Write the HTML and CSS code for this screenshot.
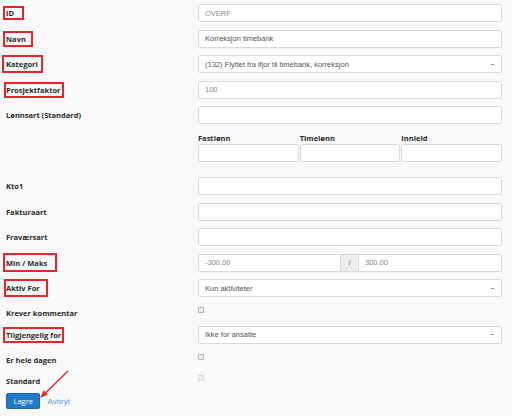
FILE: index.html
```html
<!DOCTYPE html>
<html lang="no">
<head>
<meta charset="utf-8">
<title>Fraværstype</title>
<link rel="stylesheet" href="styles.css">
</head>
<body>
<form class="form">
  <div class="row">
    <div class="lbl"><span class="hl hl-id">ID</span></div>
    <div class="ctl"><input class="input light" value="OVERF" readonly></div>
  </div>
  <div class="row">
    <div class="lbl"><span class="hl hl-navn">Navn</span></div>
    <div class="ctl"><input class="input" value="Korreksjon timebank"></div>
  </div>
  <div class="row">
    <div class="lbl"><span class="hl hl-kat">Kategori</span></div>
    <div class="ctl"><div class="input select"><span>(132) Flyttet fra ifjor til timebank, korreksjon</span><span class="caret"></span></div></div>
  </div>
  <div class="row">
    <div class="lbl"><span class="hl hl-pf">Prosjektfaktor</span></div>
    <div class="ctl"><input class="input light" value="100"></div>
  </div>
  <div class="row">
    <div class="lbl">Lønnsart (Standard)</div>
    <div class="ctl"><input class="input" value=""></div>
  </div>
  <div class="row row-sub">
    <div class="lbl"></div>
    <div class="ctl sub-grid">
      <div class="sub-lbl">Fastlønn</div>
      <div class="sub-lbl">Timelønn</div>
      <div class="sub-lbl">Innleid</div>
      <input class="input" value="">
      <input class="input" value="">
      <input class="input" value="">
    </div>
  </div>
  <div class="row">
    <div class="lbl">Kto1</div>
    <div class="ctl"><input class="input" value=""></div>
  </div>
  <div class="row">
    <div class="lbl">Fakturaart</div>
    <div class="ctl"><input class="input" value=""></div>
  </div>
  <div class="row">
    <div class="lbl">Fraværsart</div>
    <div class="ctl"><input class="input" value=""></div>
  </div>
  <div class="row">
    <div class="lbl"><span class="hl hl-mm">Min / Maks</span></div>
    <div class="ctl group">
      <input class="input light g-left" value="-300,00">
      <span class="addon">/</span>
      <input class="input light g-right" value="300,00">
    </div>
  </div>
  <div class="row">
    <div class="lbl"><span class="hl hl-af">Aktiv For</span></div>
    <div class="ctl"><div class="input select"><span>Kun aktiviteter</span><span class="caret"></span></div></div>
  </div>
  <div class="row row-check">
    <div class="lbl">Krever kommentar</div>
    <div class="ctl"><input type="checkbox" class="check"></div>
  </div>
  <div class="row">
    <div class="lbl"><span class="hl hl-tf">Tilgjengelig for</span></div>
    <div class="ctl"><div class="input select"><span>Ikke for ansatte</span><span class="caret"></span></div></div>
  </div>
  <div class="row row-check">
    <div class="lbl">Er hele dagen</div>
    <div class="ctl"><input type="checkbox" class="check"></div>
  </div>
  <div class="row row-check">
    <div class="lbl">Standard</div>
    <div class="ctl"><input type="checkbox" class="check" disabled></div>
  </div>
  <div class="actions">
    <button type="button" class="btn">Lagre</button>
    <a class="link" href="#">Avbryt</a>
    <svg class="arrow" width="40" height="36" viewBox="0 0 40 36">
      <line x1="32" y1="4" x2="10" y2="25.4" stroke="#e8262a" stroke-width="1.4"/>
      <polygon points="4,31 11.9,27.6 7.7,23.3" fill="#e8262a"/>
    </svg>
  </div>
</form>
</body>
</html>
```

FILE: styles.css
```css
body {
  margin: 0;
  background: #f9f9f9;
  font-family: "Open Sans", "Liberation Sans", sans-serif;
  color: #2b2b2b;
}

.form {
  padding: 4px 10px 0 6px;
}

.row {
  display: flex;
  margin-bottom: 7.5px;
}

.lbl {
  width: 192px;
  flex: none;
  font-size: 7.5px;
  font-weight: 700;
  line-height: 12px;
  padding-top: 3px;
  white-space: nowrap;
}

.ctl {
  width: 304px;
  flex: none;
}

.hl {
  border: 2px solid #e8262a;
}
.hl-id { margin-left: -3px; padding: 0 8px 0 1px; }
.hl-navn { margin-left: -3px; padding: 1px 5px 1px 1px; }
.hl-kat { margin-left: -4px; padding: 2px 3px 2px 2px; }
.hl-pf { margin-left: -2px; padding: 1px 1px 1px 0; }
.hl-mm { margin-left: -3px; padding: 2.5px 8px 2.5px 1px; }
.hl-af { margin-left: -2px; padding: 2px 6px 2px 0; }
.hl-tf { margin-left: -3px; padding: 1px 1px 1px 1px; }

.input {
  display: block;
  width: 100%;
  height: 18px;
  box-sizing: border-box;
  margin: 0;
  padding: 0 6px;
  border: 1px solid #dadada;
  border-radius: 2px;
  background: #fff;
  font-family: "Liberation Sans", Arial, sans-serif;
  font-size: 7.5px;
  color: #555;
  outline: none;
}

.input.light {
  color: #8a8a8a;
}

.select {
  display: flex;
  align-items: center;
  justify-content: space-between;
  white-space: nowrap;
}

.caret {
  width: 3px;
  height: 1px;
  background: #999;
  margin-right: 1px;
}

.row-sub {
  margin-bottom: 15px;
}

.sub-grid {
  display: grid;
  grid-template-columns: 1fr 1fr 1fr;
  column-gap: 1px;
}

.sub-lbl {
  font-size: 7.5px;
  font-weight: 700;
  line-height: 12px;
  height: 12.5px;
}

.group {
  display: flex;
}

.g-left {
  width: 143px;
  border-radius: 2px 0 0 2px;
}

.g-right {
  flex: 1;
  width: auto;
  border-radius: 0 2px 2px 0;
}

.addon {
  width: 17px;
  height: 18px;
  box-sizing: border-box;
  flex: none;
  background: #eeeeee;
  border-top: 1px solid #dadada;
  border-bottom: 1px solid #dadada;
  font-family: "Liberation Sans", Arial, sans-serif;
  font-size: 8px;
  line-height: 16px;
  color: #777;
  text-align: center;
}

.row-check {
  height: 14px;
  margin-bottom: 7px;
}

.row-check .lbl {
  padding-top: 2.5px;
}

.check {
  appearance: none;
  -webkit-appearance: none;
  display: block;
  width: 6px;
  height: 6px;
  box-sizing: border-box;
  margin: 2.5px 0 0 0;
  border: 1px solid #b3b3b3;
  border-radius: 1px;
  background: #efefef;
}

.check:disabled {
  border-color: #d6d6d6;
  background: #f4f4f4;
}

.actions {
  position: relative;
  display: flex;
  align-items: center;
  gap: 7px;
  margin-top: 1.5px;
}

.btn {
  height: 16px;
  padding: 0 6.5px;
  margin: 0;
  border: 1px solid #1a68ad;
  border-radius: 2px;
  background: #1f7bc9;
  color: #fff;
  font-family: "Open Sans", sans-serif;
  font-size: 7.5px;
  line-height: 14px;
  box-shadow: 0 1px 1px rgba(0, 0, 0, 0.2);
}

.link {
  font-family: "Liberation Sans", Arial, sans-serif;
  font-size: 8px;
  color: #5f9bd6;
  text-decoration: none;
}

.arrow {
  position: absolute;
  left: 30px;
  top: -26.5px;
}
```
